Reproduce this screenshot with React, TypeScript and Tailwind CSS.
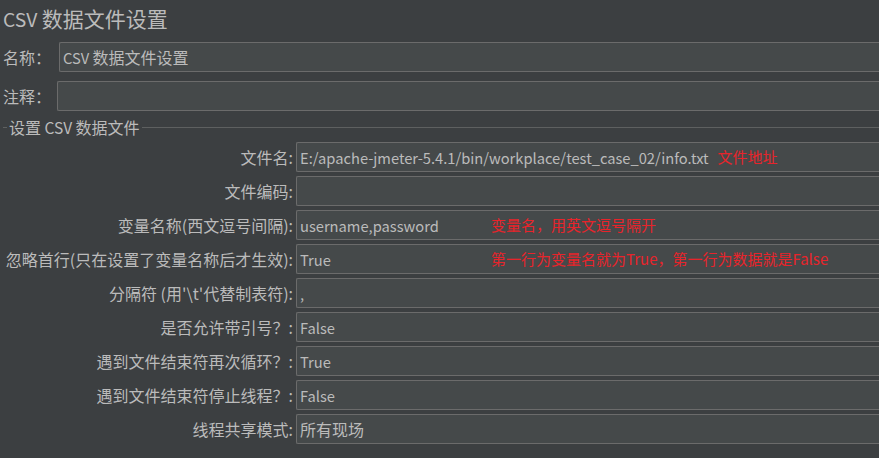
import React from "react";

const font = { fontFamily: '"Noto Sans CJK SC", "Noto Sans", sans-serif' };

// Latin runs are rendered a bit smaller than CJK runs, as in the reference UI font.
function Mixed({ text, latin }: { text: string; latin: string }) {
  const parts = text.match(/[\u0000-\u024F]+|[^\u0000-\u024F]+/g) || [];
  return (
    <>
      {parts.map((p, i) =>
        /^[\u0000-\u024F]+$/.test(p) ? (
          <span key={i} className={latin}>
            {p}
          </span>
        ) : (
          <span key={i}>{p}</span>
        )
      )}
    </>
  );
}

type Row = { label: string; value: string; note?: string; noteMode?: "after" | "fixed" };

const rows: Row[] = [
  { label: "文件名:", value: "E:/apache-jmeter-5.4.1/bin/workplace/test_case_02/info.txt", note: "文件地址", noteMode: "after" },
  { label: "文件编码:", value: "" },
  { label: "变量名称(西文逗号间隔):", value: "username,password", note: "变量名，用英文逗号隔开", noteMode: "fixed" },
  { label: "忽略首行(只在设置了变量名称后才生效):", value: "True", note: "第一行为变量名就为True，第一行为数据就是False", noteMode: "fixed" },
  { label: "分隔符 (用'\\t'代替制表符):", value: "," },
  { label: "是否允许带引号？:", value: "False" },
  { label: "遇到文件结束符再次循环？:", value: "True" },
  { label: "遇到文件结束符停止线程？:", value: "False" },
  { label: "线程共享模式:", value: "所有现场" },
];

const LAT = "text-[14.7px]";

export default function App() {
  return (
    <div
      className="w-[879px] h-[458px] bg-[#3c3f41] overflow-hidden text-[#bbbbbb] text-[16px]"
      style={font}
    >
      <div className="h-[36px] pl-[3px] text-[21px] leading-[36px] whitespace-nowrap">
        <Mixed text="CSV 数据文件设置" latin="text-[19.3px]" />
      </div>

      <div className="mt-[6px] flex items-center h-[30px]">
        <div className="w-[59px] pl-[3px] whitespace-nowrap">名称：</div>
        <div className="flex-1 h-full bg-[#45494a] border border-r-0 border-[#6b6b6b] rounded-l-[2px] flex items-center pl-[3px] whitespace-nowrap">
          <span>
            <Mixed text="CSV 数据文件设置" latin={LAT} />
          </span>
        </div>
      </div>

      <div className="mt-[9px] flex items-center h-[30px]">
        <div className="w-[57px] pl-[3px] whitespace-nowrap">注释：</div>
        <div className="flex-1 h-full bg-[#45494a] border border-r-0 border-[#6b6b6b] rounded-l-[2px]" />
      </div>

      <div className="mt-[6px] flex items-center h-[20px]">
        <div className="ml-[3px] w-[4px] h-px bg-[#5e6060]" />
        <div className="px-[2px] leading-[20px] whitespace-nowrap">
          <Mixed text="设置 CSV 数据文件" latin="text-[15.5px]" />
        </div>
        <div className="flex-1 h-px bg-[#5e6060]" />
      </div>

      <div className="mt-[5px] flex flex-col gap-[4px]">
        {rows.map((r, i) => (
          <div key={i} className="flex items-center h-[30px]">
            <div className="w-[296px] pr-[3px] text-right whitespace-nowrap">{r.label}</div>
            <div className="flex-1 h-full bg-[#45494a] border border-r-0 border-[#6b6b6b] rounded-l-[2px] flex items-center pl-[3px] whitespace-nowrap">
              {r.noteMode === "fixed" ? (
                <>
                  <span className="w-[191px]">
                    <Mixed text={r.value} latin={LAT} />
                  </span>
                  <span className="text-[15px] text-[#e8242b]">{r.note}</span>
                </>
              ) : (
                <>
                  <span>
                    <Mixed text={r.value} latin={LAT} />
                  </span>
                  {r.note && <span className="ml-[9px] text-[15px] text-[#e8242b]">{r.note}</span>}
                </>
              )}
            </div>
          </div>
        ))}
      </div>
    </div>
  );
}
